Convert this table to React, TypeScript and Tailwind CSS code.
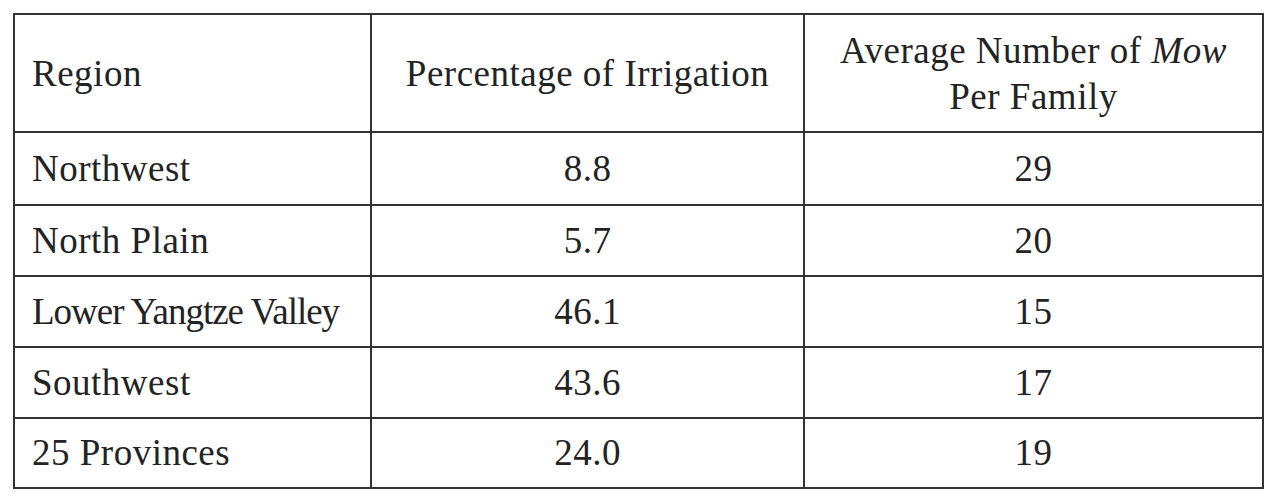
import React from "react";

const rows: [string, string, string][] = [
  ["Northwest", "8.8", "29"],
  ["North Plain", "5.7", "20"],
  ["Lower Yangtze Valley", "46.1", "15"],
  ["Southwest", "43.6", "17"],
  ["25 Provinces", "24.0", "19"],
];

const rowHeights = ["h-[73px]", "h-[71px]", "h-[71px]", "h-[71px]", "h-[70px]"];

export default function App() {
  return (
    <div
      className="w-[1278px] h-[504px] bg-white pt-[13px] pl-[13px] text-[#232323]"
      style={{ fontFamily: '"Liberation Serif", "Times New Roman", serif' }}
    >
      <div className="w-[1251px] border-2 border-[#333] text-[37px] tracking-[0.5px]">
        <div className="grid grid-cols-[355px_433px_459px] h-[116px]">
          <div className="flex items-center pl-[17px] pt-[2px]">Region</div>
          <div className="flex items-center justify-center border-l-2 border-[#333] pt-[2px]">
            Percentage of Irrigation
          </div>
          <div className="flex flex-col items-center justify-center border-l-2 border-[#333] leading-[46px] pt-[2px]">
            <span>
              Average Number of <i>Mow</i>
            </span>
            <span>Per Family</span>
          </div>
        </div>
        {rows.map((r, i) => (
          <div
            key={r[0]}
            className={`grid grid-cols-[355px_433px_459px] border-t-2 border-[#333] ${rowHeights[i]}`}
          >
            <div
              className={`flex items-center pl-[17px] whitespace-nowrap ${
                i === 2 ? "tracking-[-1px]" : ""
              }`}
            >
              {r[0]}
            </div>
            <div className="flex items-center justify-center border-l-2 border-[#333]">{r[1]}</div>
            <div className="flex items-center justify-center border-l-2 border-[#333]">{r[2]}</div>
          </div>
        ))}
      </div>
    </div>
  );
}
